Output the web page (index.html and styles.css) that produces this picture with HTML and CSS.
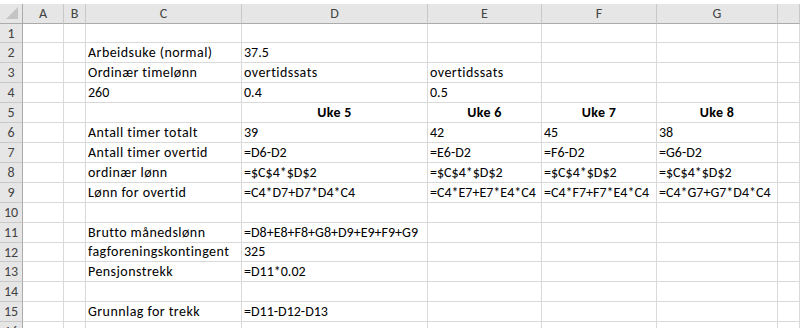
FILE: index.html
```html
<!DOCTYPE html>
<html lang="no">
<head>
<meta charset="utf-8">
<title>Lønn</title>
<link rel="stylesheet" href="styles.css">
</head>
<body>
<div class="sheet">
  <div class="hd corner"><span class="tri"></span></div>
  <div class="hd col">A</div><div class="hd col">B</div><div class="hd col">C</div><div class="hd col">D</div><div class="hd col">E</div><div class="hd col">F</div><div class="hd col">G</div><div class="hd col last"></div>

  <div class="hd row">1</div><div class="c"></div><div class="c"></div><div class="c"></div><div class="c"></div><div class="c"></div><div class="c"></div><div class="c"></div><div class="c"></div>

  <div class="hd row">2</div><div class="c"></div><div class="c"></div><div class="c lbl">Arbeidsuke (normal)</div><div class="c">37.5</div><div class="c"></div><div class="c"></div><div class="c"></div><div class="c"></div>

  <div class="hd row">3</div><div class="c"></div><div class="c"></div><div class="c lbl">Ordinær timelønn</div><div class="c lbl">overtidssats</div><div class="c lbl">overtidssats</div><div class="c"></div><div class="c"></div><div class="c"></div>

  <div class="hd row">4</div><div class="c"></div><div class="c"></div><div class="c">260</div><div class="c">0.4</div><div class="c">0.5</div><div class="c"></div><div class="c"></div><div class="c"></div>

  <div class="hd row">5</div><div class="c"></div><div class="c"></div><div class="c"></div><div class="c b">Uke 5</div><div class="c b">Uke 6</div><div class="c b">Uke 7</div><div class="c b">Uke 8</div><div class="c"></div>

  <div class="hd row">6</div><div class="c"></div><div class="c"></div><div class="c lbl">Antall timer totalt</div><div class="c">39</div><div class="c">42</div><div class="c">45</div><div class="c">38</div><div class="c"></div>

  <div class="hd row">7</div><div class="c"></div><div class="c"></div><div class="c lbl">Antall timer overtid</div><div class="c">=D6-D2</div><div class="c">=E6-D2</div><div class="c">=F6-D2</div><div class="c">=G6-D2</div><div class="c"></div>

  <div class="hd row">8</div><div class="c"></div><div class="c"></div><div class="c lbl">ordinær lønn</div><div class="c">=$C$4*$D$2</div><div class="c">=$C$4*$D$2</div><div class="c">=$C$4*$D$2</div><div class="c">=$C$4*$D$2</div><div class="c"></div>

  <div class="hd row">9</div><div class="c"></div><div class="c"></div><div class="c lbl">Lønn for overtid</div><div class="c">=C4*D7+D7*D4*C4</div><div class="c">=C4*E7+E7*E4*C4</div><div class="c">=C4*F7+F7*E4*C4</div><div class="c">=C4*G7+G7*D4*C4</div><div class="c"></div>

  <div class="hd row">10</div><div class="c"></div><div class="c"></div><div class="c"></div><div class="c"></div><div class="c"></div><div class="c"></div><div class="c"></div><div class="c"></div>

  <div class="hd row">11</div><div class="c"></div><div class="c"></div><div class="c lbl">Brutto månedslønn</div><div class="c">=D8+E8+F8+G8+D9+E9+F9+G9</div><div class="c"></div><div class="c"></div><div class="c"></div><div class="c"></div>

  <div class="hd row">12</div><div class="c"></div><div class="c"></div><div class="c lbl">fagforeningskontingent</div><div class="c">325</div><div class="c"></div><div class="c"></div><div class="c"></div><div class="c"></div>

  <div class="hd row">13</div><div class="c"></div><div class="c"></div><div class="c lbl">Pensjonstrekk</div><div class="c">=D11*0.02</div><div class="c"></div><div class="c"></div><div class="c"></div><div class="c"></div>

  <div class="hd row">14</div><div class="c"></div><div class="c"></div><div class="c"></div><div class="c"></div><div class="c"></div><div class="c"></div><div class="c"></div><div class="c"></div>

  <div class="hd row">15</div><div class="c"></div><div class="c"></div><div class="c lbl">Grunnlag for trekk</div><div class="c">=D11-D12-D13</div><div class="c"></div><div class="c"></div><div class="c"></div><div class="c"></div>

  <div class="hd row">16</div><div class="c"></div><div class="c"></div><div class="c"></div><div class="c"></div><div class="c"></div><div class="c"></div><div class="c"></div><div class="c"></div>
</div>
</body>
</html>
```

FILE: styles.css
```css
html, body {
  margin: 0;
  padding: 0;
  background: #ffffff;
  overflow: hidden;
}
body {
  font-family: "Carlito", "Lato", "Liberation Sans", sans-serif;
  font-size: 14px;
  color: #000000;
}
.sheet {
  padding-top: 4px;
  display: grid;
  grid-template-columns: 23px 41px 22px 156px 186px 114px 115px 121px 22px;
  grid-template-rows: 20px 19px repeat(10, 20px) 19px repeat(3, 20px) 20px;
  width: 800px;
}
.sheet > div {
  box-sizing: border-box;
  border-right: 1px solid #d9d9d9;
  border-bottom: 1px solid #d9d9d9;
  white-space: nowrap;
  overflow: visible;
}
.c {
  padding: 0 0 1px 2px;
  display: flex;
  align-items: flex-end;
  line-height: 17px;
}
.c.lbl {
  letter-spacing: 0.45px;
}
.c.b {
  font-weight: bold;
  justify-content: center;
  padding-left: 0;
  letter-spacing: 0.3px;
}
.hd {
  background: #e6e6e6;
  color: #444444;
  display: flex;
  align-items: center;
  justify-content: center;
}
.hd.col {
  border-right-color: #c9c9c9;
  border-bottom: 1px solid #ababab;
}
.hd.row {
  border-right: 1px solid #ababab;
  border-bottom-color: #c9c9c9;
}
.hd.corner {
  position: relative;
  border-right: 1px solid #ababab;
  border-bottom: 1px solid #ababab;
}
.tri {
  position: absolute;
  right: 4px;
  bottom: 4px;
  width: 0;
  height: 0;
  border-left: 12px solid transparent;
  border-bottom: 12px solid #c4c4c4;
}
```
